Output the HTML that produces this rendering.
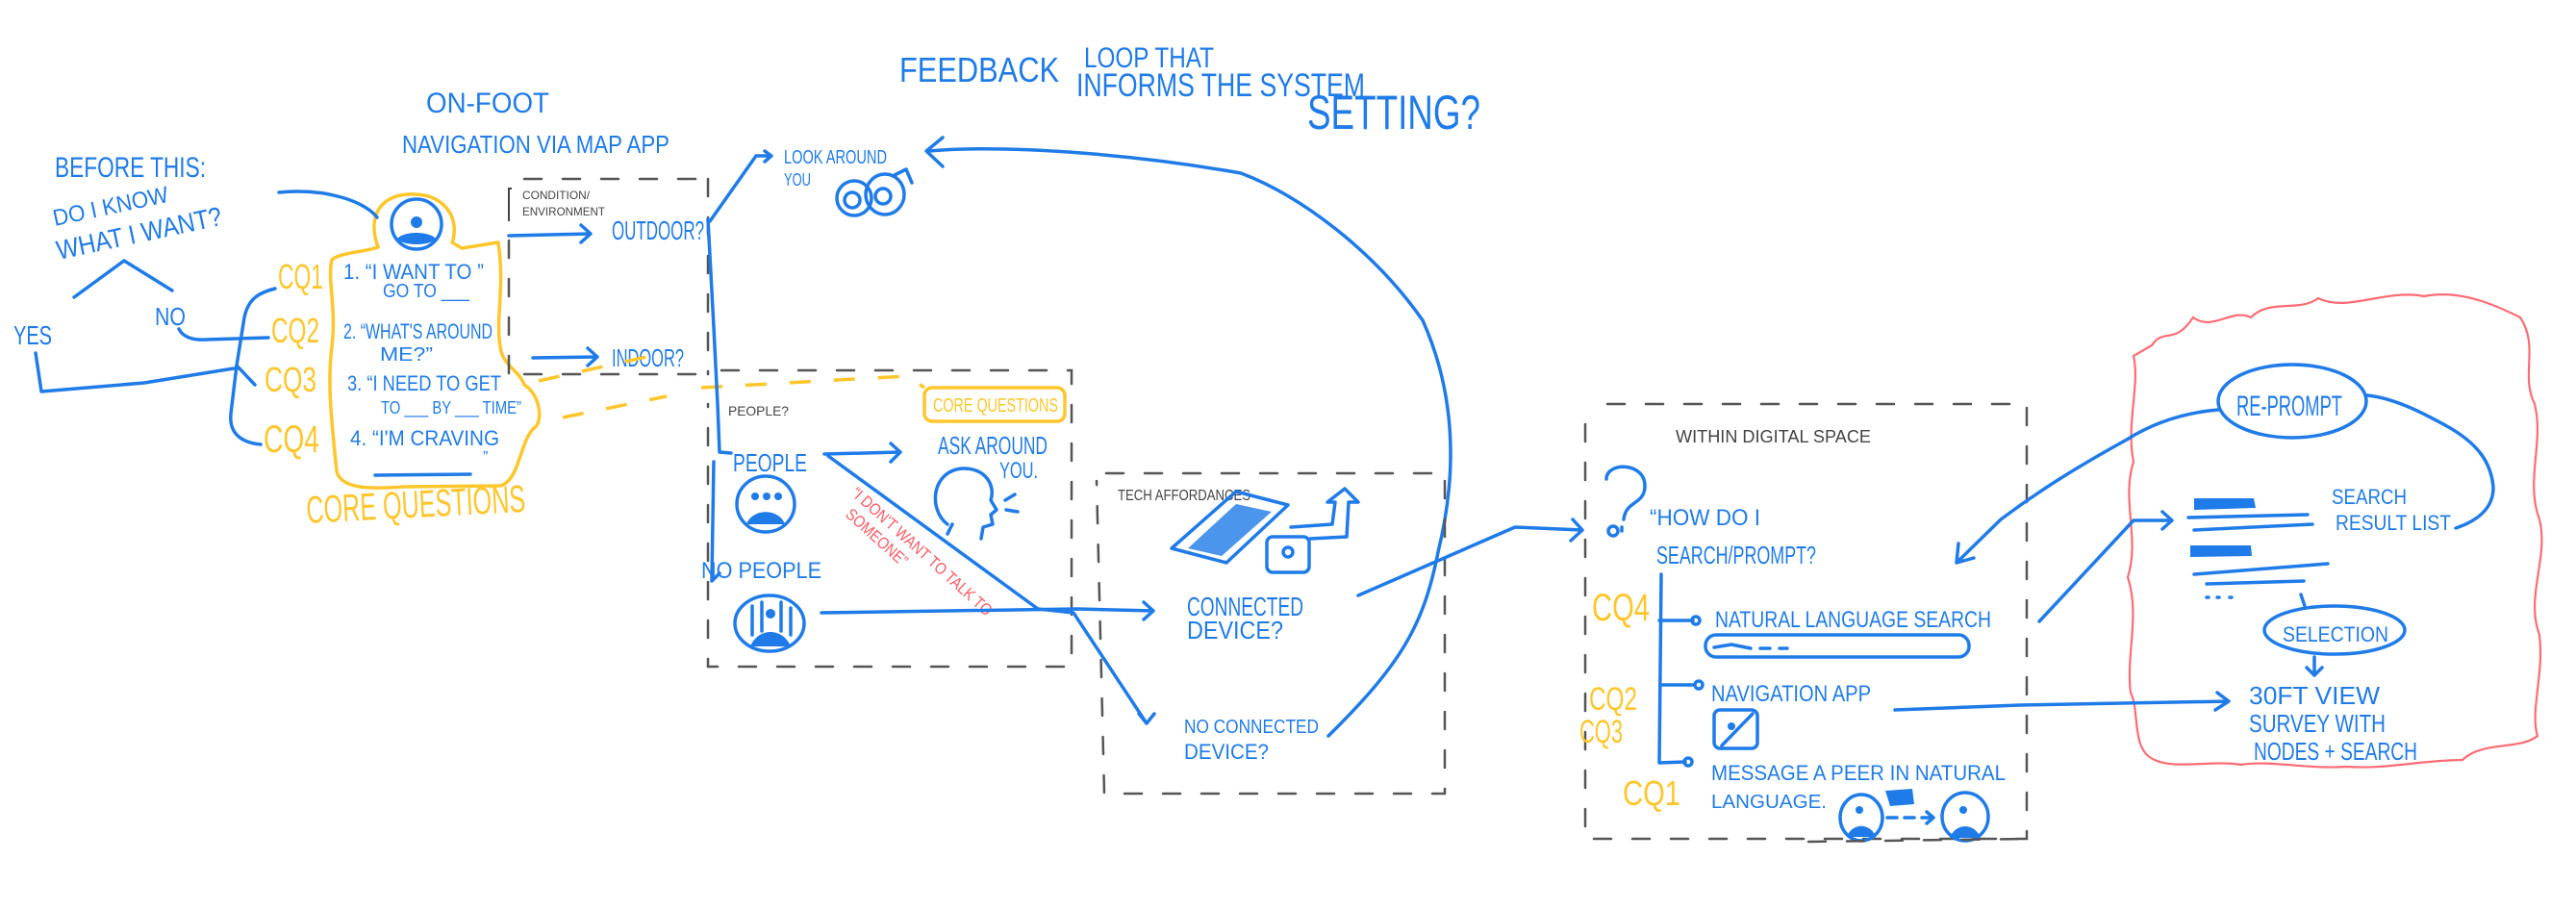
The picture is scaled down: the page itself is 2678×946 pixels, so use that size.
<!DOCTYPE html>
<html><head><meta charset="utf-8"><style>
html,body{margin:0;padding:0;background:#fff;width:2678px;height:946px;overflow:hidden}
svg{display:block}
text{font-family:"Liberation Sans Narrow","Liberation Sans",sans-serif;}
.b{fill:#1f7be8}.y{fill:#ffc62b}.g{fill:#444}.r{fill:#ff5a64}
.bl{fill:none;stroke:#1f7be8;stroke-width:3.5;stroke-linecap:round;stroke-linejoin:round}
.yl{fill:none;stroke:#ffc62b;stroke-width:3.5;stroke-linecap:round;stroke-linejoin:round}
.gd{fill:none;stroke:#555;stroke-width:2.5;stroke-dasharray:18 22;stroke-linecap:round}
</style></head><body>
<svg width="2678" height="946" viewBox="0 0 2678 946" xmlns="http://www.w3.org/2000/svg">
<!-- top texts -->
<text class="b" x="935" y="85" font-size="36" textLength="166" lengthAdjust="spacingAndGlyphs">FEEDBACK</text>
<text class="b" x="1127" y="70" font-size="30" textLength="135" lengthAdjust="spacingAndGlyphs">LOOP THAT</text>
<text class="b" x="1119" y="100" font-size="34" textLength="300" lengthAdjust="spacingAndGlyphs">INFORMS THE SYSTEM</text>
<text class="b" x="1359" y="134" font-size="50" textLength="180" lengthAdjust="spacingAndGlyphs">SETTING?</text>
<text class="b" x="443" y="117" font-size="30" textLength="128" lengthAdjust="spacingAndGlyphs">ON-FOOT</text>
<text class="b" x="418" y="159" font-size="26" textLength="278" lengthAdjust="spacingAndGlyphs">NAVIGATION  VIA  MAP APP</text>
<text class="b" x="57" y="184" font-size="30" textLength="157" lengthAdjust="spacingAndGlyphs">BEFORE THIS:</text>
<text class="b" x="57" y="235" font-size="24" textLength="122" lengthAdjust="spacingAndGlyphs" transform="rotate(-12 57 235)">DO I KNOW</text>
<text class="b" x="61" y="270" font-size="28" textLength="175" lengthAdjust="spacingAndGlyphs" transform="rotate(-12 61 270)">WHAT I WANT?</text>
<text class="b" x="14" y="358" font-size="28" textLength="40" lengthAdjust="spacingAndGlyphs">YES</text>
<text class="b" x="161" y="338" font-size="26" textLength="32" lengthAdjust="spacingAndGlyphs">NO</text>
<path class="bl" d="M77,309 L129,271 L179,302"/>
<path class="bl" d="M37,367 L43,407 L150,398 L243,383"/>
<path class="bl" d="M186,342 C190,350 200,354 214,353 L279,351"/>
<path class="bl" d="M286,300 C270,304 258,310 254,330 L246,380 L240,430 C238,450 250,460 271,462"/>
<path class="bl" d="M246,380 L265,400"/>
<!-- CQ labels -->
<text class="y" x="289" y="300" font-size="36" textLength="47" lengthAdjust="spacingAndGlyphs">CQ1</text>
<text class="y" x="282" y="356" font-size="36" textLength="50" lengthAdjust="spacingAndGlyphs">CQ2</text>
<text class="y" x="275" y="407" font-size="36" textLength="54" lengthAdjust="spacingAndGlyphs">CQ3</text>
<text class="y" x="274" y="470" font-size="40" textLength="58" lengthAdjust="spacingAndGlyphs">CQ4</text>
<!-- yellow blob -->
<path class="yl" d="M393,257 C380,220 400,200 432,202 C465,203 478,230 470,252 L480,258 L518,252 C525,300 515,330 520,360 C522,380 540,385 545,400 C562,410 565,440 555,445 C540,460 540,500 520,505 L420,506 C390,508 355,510 350,490 C345,440 340,400 345,360 C350,320 340,290 345,270 C355,262 380,262 393,257 Z"/>
<path class="bl" d="M290,200 C340,195 380,210 392,226"/>
<circle cx="433" cy="233" r="26" class="bl"/>
<circle cx="433" cy="231" r="6" class="b"/>
<path class="b" d="M413,248 C420,240 446,240 453,248 C448,256 418,256 413,248Z"/>
<text class="b" x="357" y="290" font-size="22" textLength="146" lengthAdjust="spacingAndGlyphs">1. “I WANT TO ”</text>
<text class="b" x="398" y="309" font-size="20" textLength="90" lengthAdjust="spacingAndGlyphs">GO TO ___</text>
<text class="b" x="357" y="352" font-size="22" textLength="155" lengthAdjust="spacingAndGlyphs">2. “WHAT'S AROUND</text>
<text class="b" x="395" y="375" font-size="20" textLength="55" lengthAdjust="spacingAndGlyphs">ME?”</text>
<text class="b" x="361" y="406" font-size="22" textLength="160" lengthAdjust="spacingAndGlyphs">3. “I NEED TO GET</text>
<text class="b" x="396" y="430" font-size="18" textLength="146" lengthAdjust="spacingAndGlyphs">TO ___ BY ___ TIME”</text>
<text class="b" x="364" y="463" font-size="22" textLength="155" lengthAdjust="spacingAndGlyphs">4. “I'M  CRAVING</text>
<text class="b" x="502" y="480" font-size="16">”</text>
<path class="bl" d="M390,494 L489,493"/>
<text class="y" x="318" y="538" font-size="40" textLength="228" lengthAdjust="spacingAndGlyphs" transform="rotate(-3 430 520)">CORE QUESTIONS</text>
<!-- condition box -->
<path class="gd" d="M545,186 L736,186 M736,186 L736,389 M545,389 L736,389 M529,250 L529,389"/>
<path d="M532,196 L529,196 L529,230" fill="none" stroke="#444" stroke-width="2"/>
<text class="g" x="543" y="207" font-size="12" textLength="70" lengthAdjust="spacingAndGlyphs">CONDITION/</text>
<text class="g" x="543" y="224" font-size="12" textLength="86" lengthAdjust="spacingAndGlyphs">ENVIRONMENT</text>
<path class="bl" d="M529,245 L614,243 M604,234 L614,243 L604,252"/>
<text class="b" x="636" y="249" font-size="28" textLength="96" lengthAdjust="spacingAndGlyphs">OUTDOOR?</text>
<path class="bl" d="M554,372 L621,371 M611,362 L621,371 L611,380"/>
<text class="b" x="636" y="381" font-size="26" textLength="75" lengthAdjust="spacingAndGlyphs">INDOOR?</text>
<!-- look around -->
<path class="bl" d="M738,230 L786,162 L800,162 M795,157 L802,162 L795,168"/>
<text class="b" x="815" y="170" font-size="20" textLength="107" lengthAdjust="spacingAndGlyphs">LOOK AROUND</text>
<text class="b" x="815" y="193" font-size="18" textLength="28" lengthAdjust="spacingAndGlyphs">YOU</text>
<ellipse cx="888" cy="206" rx="18" ry="18" class="bl"/><ellipse cx="920" cy="202" rx="20" ry="21" class="bl"/>
<circle cx="886" cy="208" r="8" class="bl"/><circle cx="918" cy="204" r="8" class="bl"/>
<path class="bl" d="M930,182 L942,176 L948,190"/>
<!-- feedback loop -->
<path class="bl" d="M965,157 C1045,150 1178,160 1290,180 C1351,203 1428,260 1479,333 C1509,400 1518,480 1495,574 C1480,650 1457,690 1381,765"/>
<path class="bl" d="M980,143 L963,157 L980,173"/>
<!-- yellow dashes -->
<path d="M560,396 L690,367 M585,434 L693,412 M729,403 L943,391 L961,403" fill="none" stroke="#ffc62b" stroke-width="3.5" stroke-dasharray="22 24"/>
<!-- people box -->
<path class="gd" d="M750,385 L1114,385 L1114,693 L736,693 L736,420"/>
<path class="bl" d="M736,228 L742,340 L746,420 L748,470 L760,471 M742,480 L740,604 L748,596"/>
<text class="g" x="757" y="432" font-size="14" textLength="63" lengthAdjust="spacingAndGlyphs">PEOPLE?</text>
<rect x="961" y="403" width="146" height="35" rx="8" class="yl"/>
<text class="y" x="970" y="428" font-size="20" textLength="130" lengthAdjust="spacingAndGlyphs">CORE QUESTIONS</text>
<text class="b" x="975" y="472" font-size="26" textLength="114" lengthAdjust="spacingAndGlyphs">ASK AROUND</text>
<text class="b" x="1039" y="497" font-size="24" textLength="40" lengthAdjust="spacingAndGlyphs">YOU.</text>
<text class="b" x="762" y="490" font-size="26" textLength="77" lengthAdjust="spacingAndGlyphs">PEOPLE</text>
<path class="bl" d="M857,472 L936,470 M926,461 L936,470 L926,480"/>
<ellipse cx="796" cy="524" rx="30" ry="29" class="bl"/>
<circle cx="785" cy="516" r="4" class="b"/><circle cx="797" cy="516" r="4" class="b"/><circle cx="809" cy="516" r="4" class="b"/>
<path class="b" d="M776,545 C782,528 810,528 816,545 Z"/>
<path class="bl" d="M985,545 C965,530 968,490 1000,487 C1025,486 1035,505 1030,520 L1036,530 L1030,535 L1032,545 L1022,548 L1020,560 M990,545 L985,555 M1045,520 L1055,514 M1046,530 L1058,532"/>
<text class="r" x="884" y="514" font-size="17" textLength="190" lengthAdjust="spacingAndGlyphs" transform="rotate(42 884 514)">“I DON'T WANT TO TALK TO</text>
<text class="r" x="878" y="536" font-size="17" textLength="80" lengthAdjust="spacingAndGlyphs" transform="rotate(42 878 536)">SOMEONE”</text>
<path class="bl" d="M861,474 L1079,633 L1116,637 L1192,752 M1184,742 L1192,752 L1200,742"/>
<text class="b" x="729" y="601" font-size="24" textLength="125" lengthAdjust="spacingAndGlyphs">NO PEOPLE</text>
<ellipse cx="800" cy="648" rx="36" ry="29" class="bl"/>
<path class="bl" d="M782,630 L782,660 M792,626 L792,656 M812,626 L812,656 M822,632 L822,660"/>
<circle cx="801" cy="638" r="5" class="b"/>
<path class="b" d="M780,672 C788,652 814,652 822,672 Z"/>
<path class="bl" d="M854,637 L1120,633 L1199,635 M1189,626 L1199,635 L1189,644"/>
<!-- tech box -->
<path class="gd" d="M1150,492 L1502,492 L1502,825 L1148,825 L1140,500"/>
<text class="g" x="1162" y="520" font-size="16" textLength="138" lengthAdjust="spacingAndGlyphs">TECH AFFORDANCES</text>
<path class="bl" d="M1218,570 L1285,511 L1339,525 L1275,585 Z"/>
<path class="b" d="M1235,570 L1285,524 L1322,532 L1270,578 Z" opacity="0.8"/>
<rect x="1317" y="558" width="44" height="37" rx="6" class="bl"/>
<circle cx="1339" cy="574" r="5" class="bl"/>
<path class="bl" d="M1342,548 L1385,545 L1388,522 L1380,522 L1398,508 L1412,522 L1402,522 L1400,558 L1362,560"/>
<text class="b" x="1234" y="640" font-size="28" textLength="121" lengthAdjust="spacingAndGlyphs">CONNECTED</text>
<text class="b" x="1234" y="664" font-size="26" textLength="100" lengthAdjust="spacingAndGlyphs">DEVICE?</text>
<text class="b" x="1231" y="762" font-size="20" textLength="140" lengthAdjust="spacingAndGlyphs">NO CONNECTED</text>
<text class="b" x="1231" y="789" font-size="22" textLength="88" lengthAdjust="spacingAndGlyphs">DEVICE?</text>
<path class="bl" d="M1412,619 L1575,548 L1645,551 M1635,540 L1645,551 L1633,562"/>
<!-- digital space box -->
<path class="gd" d="M1671,420 L2107,420 L2107,872 L1648,872 L1648,430"/>
<text class="g" x="1742" y="460" font-size="18" textLength="203" lengthAdjust="spacingAndGlyphs">WITHIN DIGITAL SPACE</text>
<path class="bl" d="M1670,498 C1670,480 1710,480 1710,505 C1710,525 1690,520 1688,540 M1686,548 L1686,552"/>
<circle cx="1677" cy="552" r="5" class="bl"/>
<text class="b" x="1715" y="546" font-size="24" textLength="115" lengthAdjust="spacingAndGlyphs">“HOW DO I</text>
<text class="b" x="1722" y="586" font-size="26" textLength="166" lengthAdjust="spacingAndGlyphs">SEARCH/PROMPT?</text>
<path class="bl" d="M1727,597 L1725,793 L1752,792 M1725,645 L1760,645 M1728,712 L1762,712"/>
<circle cx="1763" cy="645" r="4" class="bl"/><circle cx="1766" cy="712" r="4" class="bl"/><circle cx="1755" cy="792" r="4" class="bl"/>
<text class="y" x="1655" y="645" font-size="40" textLength="60" lengthAdjust="spacingAndGlyphs">CQ4</text>
<text class="y" x="1652" y="738" font-size="34" textLength="50" lengthAdjust="spacingAndGlyphs">CQ2</text>
<text class="y" x="1642" y="772" font-size="34" textLength="45" lengthAdjust="spacingAndGlyphs">CQ3</text>
<text class="y" x="1687" y="837" font-size="36" textLength="60" lengthAdjust="spacingAndGlyphs">CQ1</text>
<text class="b" x="1783" y="652" font-size="24" textLength="287" lengthAdjust="spacingAndGlyphs">NATURAL LANGUAGE SEARCH</text>
<rect x="1773" y="660" width="274" height="23" rx="11" class="bl"/>
<path class="bl" d="M1782,673 L1800,670 L1820,674 M1830,674 L1840,674 M1850,674 L1858,674"/>
<text class="b" x="1779" y="729" font-size="24" textLength="166" lengthAdjust="spacingAndGlyphs">NAVIGATION APP</text>
<rect x="1782" y="738" width="45" height="40" rx="6" class="bl"/>
<path class="bl" d="M1790,775 L1822,742"/><circle cx="1800" cy="755" r="4" class="b"/>
<text class="b" x="1779" y="811" font-size="22" textLength="306" lengthAdjust="spacingAndGlyphs">MESSAGE A PEER IN NATURAL</text>
<text class="b" x="1779" y="840" font-size="20" textLength="120" lengthAdjust="spacingAndGlyphs">LANGUAGE.</text>
<ellipse cx="1935" cy="850" rx="22" ry="24" class="bl"/><circle cx="1933" cy="842" r="4" class="b"/><path class="b" d="M1920,870 C1925,855 1945,855 1950,870Z"/>
<ellipse cx="2043" cy="849" rx="24" ry="25" class="bl"/><circle cx="2041" cy="842" r="4" class="b"/><path class="b" d="M2027,871 C2033,855 2053,855 2059,871Z"/>
<path class="b" d="M1960,822 L1988,820 L1990,836 L1965,838 Z"/>
<path class="bl" d="M1962,850 L1972,850 M1980,850 L1990,850 M1998,850 L2008,850 M2003,844 L2010,850 L2003,856"/>
<path class="gd" d="M1880,875 L2107,872"/>
<!-- right side -->
<path d="M2237,359 C2250,340 2260,360 2280,330 C2300,345 2320,320 2340,330 C2360,310 2390,325 2410,310 C2440,325 2480,300 2520,308 C2560,300 2600,320 2620,330 C2640,360 2620,390 2635,420 C2645,460 2625,500 2640,540 C2650,580 2625,620 2640,660 C2645,700 2630,740 2638,765 C2620,780 2580,770 2560,790 C2520,790 2480,800 2440,797 C2400,800 2360,790 2330,795 C2300,790 2260,800 2240,790 C2215,780 2225,740 2215,720 C2210,680 2225,640 2212,600 C2225,560 2205,520 2218,480 C2210,440 2225,400 2218,370 Z" fill="none" stroke="#ff6b73" stroke-width="2.2"/>
<ellipse cx="2383" cy="417" rx="77" ry="38" class="bl"/>
<text class="b" x="2325" y="432" font-size="30" textLength="110" lengthAdjust="spacingAndGlyphs">RE-PROMPT</text>
<path class="bl" d="M2306,426 C2260,430 2230,445 2211,457 C2160,485 2120,510 2080,540 L2034,585 M2036,565 L2034,585 L2052,580"/>
<path class="bl" d="M2461,411 C2490,414 2520,430 2542,442 C2575,460 2590,480 2592,507 C2592,525 2580,540 2553,549"/>
<text class="b" x="2424" y="524" font-size="22" textLength="78" lengthAdjust="spacingAndGlyphs">SEARCH</text>
<text class="b" x="2428" y="551" font-size="22" textLength="120" lengthAdjust="spacingAndGlyphs">RESULT LIST</text>
<path class="b" d="M2281,518 L2343,518 L2345,528 L2281,530 Z"/>
<path class="bl" d="M2275,538 L2399,535 M2281,551 L2404,545"/>
<path class="b" d="M2277,567 L2340,567 L2341,578 L2277,579 Z"/>
<path class="bl" d="M2281,597 L2420,586 M2294,607 L2395,604 M2294,621 L2296,621 M2305,621 L2307,621 M2318,621 L2320,621"/>
<path class="bl" d="M2120,646 L2218,541 L2258,541 M2248,532 L2258,541 L2248,550"/>
<path class="bl" d="M2392,618 L2396,630"/>
<ellipse cx="2427" cy="655" rx="73" ry="25" class="bl"/>
<text class="b" x="2373" y="667" font-size="22" textLength="110" lengthAdjust="spacingAndGlyphs">SELECTION</text>
<path class="bl" d="M2406,683 L2406,702 M2398,694 L2406,702 L2414,694"/>
<path class="bl" d="M1970,738 L2100,733 L2317,729 M2305,720 L2317,729 L2303,738"/>
<text class="b" x="2338" y="732" font-size="26" textLength="136" lengthAdjust="spacingAndGlyphs">30FT VIEW</text>
<text class="b" x="2338" y="761" font-size="26" textLength="142" lengthAdjust="spacingAndGlyphs">SURVEY WITH</text>
<text class="b" x="2343" y="790" font-size="26" textLength="170" lengthAdjust="spacingAndGlyphs">NODES + SEARCH</text>
</svg>
</body></html>
